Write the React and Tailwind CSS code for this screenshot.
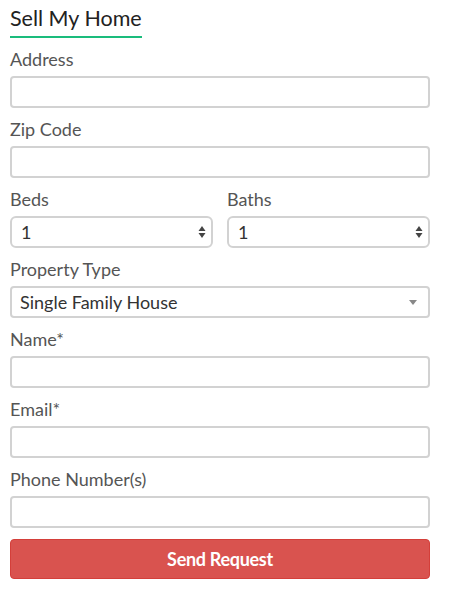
import React from "react";

const font = { fontFamily: "Lato, 'Open Sans', sans-serif" };

function Label({ children }) {
  return (
    <div className="h-[22px] leading-[22px] text-[18px] text-[#555] mb-[6px] whitespace-nowrap">{children}</div>
  );
}

function Input() {
  return (
    <input
      type="text"
      className="block w-full h-[32px] border-2 border-[#d2d2d2] rounded-[4px] bg-white px-[10px] text-[18px] text-[#333] outline-none"
    />
  );
}

function UpDown() {
  return (
    <svg width="8" height="14" viewBox="0 0 8 14" className="absolute right-[7px] top-1/2 -translate-y-1/2">
      <path d="M4 1 L7.5 6 L0.5 6 Z" fill="#444" />
      <path d="M4 13 L7.5 8 L0.5 8 Z" fill="#444" />
    </svg>
  );
}

function NumSelect() {
  return (
    <div className="relative flex-1">
      <select className="appearance-none block w-full h-[32px] border-2 border-[#d2d2d2] rounded-[6px] bg-white pl-[9px] text-[18px] text-[#333] outline-none">
        <option>1</option>
        <option>2</option>
        <option>3</option>
        <option>4</option>
        <option>5</option>
      </select>
      <UpDown />
    </div>
  );
}

function Group({ label, children }) {
  return (
    <div className="mb-[10px]">
      <Label>{label}</Label>
      {children}
    </div>
  );
}

export default function App() {
  return (
    <div className="w-[450px] h-[596px] bg-white" style={font}>
      <div className="pl-[10px] w-[430px]">
        <div className="inline-block border-b-2 border-[#1abc7c] pt-[4px] h-[38px]">
          <span className="text-[21.5px] leading-[28px] text-[#222]">Sell My Home</span>
        </div>
        <div className="mt-[10px]">
          <Group label="Address"><Input /></Group>
          <Group label="Zip Code"><Input /></Group>
          <div className="flex gap-[14px] mb-[10px]">
            <div className="flex-1">
              <Label>Beds</Label>
              <div className="flex"><NumSelect /></div>
            </div>
            <div className="flex-1">
              <Label>Baths</Label>
              <div className="flex"><NumSelect /></div>
            </div>
          </div>
          <Group label="Property Type">
            <div className="relative">
              <select className="appearance-none block w-full h-[32px] border-2 border-[#d2d2d2] rounded-[4px] bg-white pl-[8px] text-[18px] text-[#333] outline-none">
                <option>Single Family House</option>
                <option>Condo</option>
                <option>Townhouse</option>
              </select>
              <svg width="8" height="5" viewBox="0 0 8 5" className="absolute right-[13px] top-[14px]">
                <path d="M0 0 L8 0 L4 5 Z" fill="#888" />
              </svg>
            </div>
          </Group>
          <Group label="Name*"><Input /></Group>
          <Group label="Email*"><Input /></Group>
          <Group label="Phone Number(s)"><Input /></Group>
          <button className="block w-full h-[40px] mt-[11px] bg-[#d9534f] border border-[#d43f3a] rounded-[4px] text-white text-[18px] font-bold tracking-[-0.3px]">
            Send Request
          </button>
        </div>
      </div>
    </div>
  );
}
